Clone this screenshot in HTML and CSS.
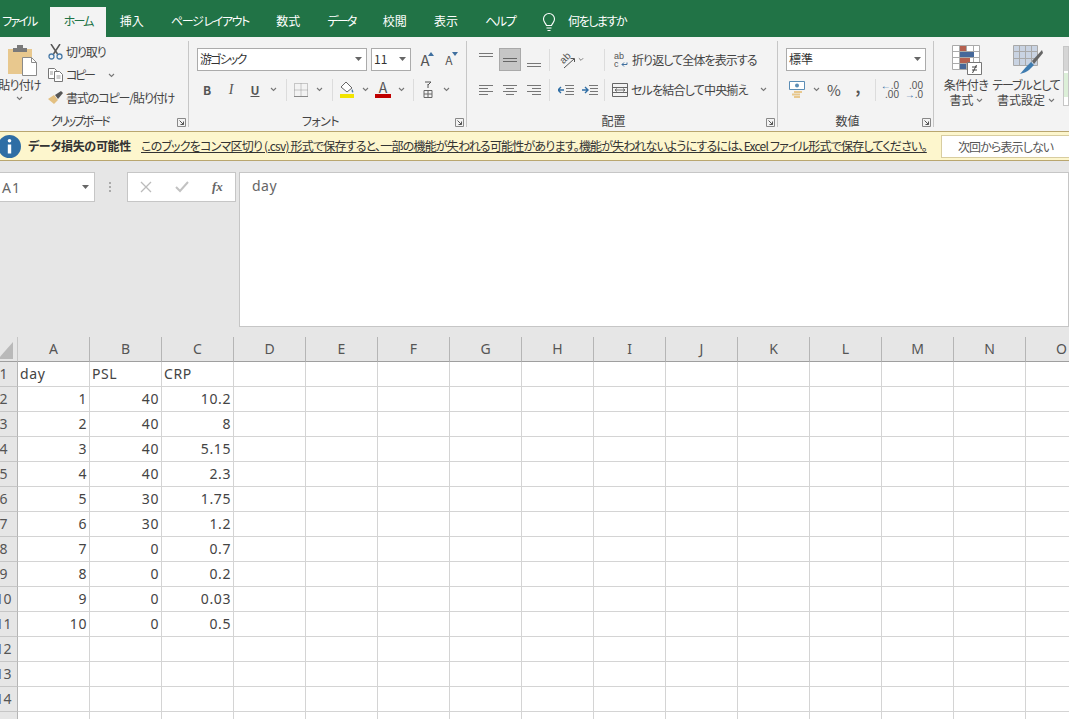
FILE: index.html
```html
<!DOCTYPE html>
<html lang="ja">
<head>
<meta charset="utf-8">
<title>Excel</title>
<link rel="stylesheet" href="styles.css">
</head>
<body>
<svg class="defs" width="0" height="0"><defs>
<symbol id="chev" viewBox="0 0 7 5"><path d="M1 1l2.5 2.5L6 1" fill="none" stroke="#777" stroke-width="1.1"/></symbol>
<symbol id="launch" viewBox="0 0 9 9"><path d="M.5.5h8v8h-8z" fill="none" stroke="#888"/><path d="M2.5 2.5l4 4M6.5 3.5v3h-3" fill="none" stroke="#555"/></symbol>
<symbol id="tri" viewBox="0 0 7 4"><path d="M0 0h7L3.5 4z" fill="#666"/></symbol>
</defs></svg>

<nav class="tabs">
  <span class="tab k2">ファイル</span>
  <span class="tab k2 tab-active">ホーム</span>
  <span class="tab">挿入</span>
  <span class="tab k13">ページ レイアウト</span>
  <span class="tab">数式</span>
  <span class="tab k2">データ</span>
  <span class="tab">校閲</span>
  <span class="tab">表示</span>
  <span class="tab k13">ヘルプ</span>
  <svg class="bulb" width="16" height="20" viewBox="0 0 16 20"><path d="M5.5 13.5C4.500 11 2.500 10 2.500 7a5.500 5.500 0 0 1 11 0c0 3-2 4-3 6.500zM5.500 16h5M6.500 18.500h3" fill="none" stroke="#fff" stroke-width="1.1"/></svg>
  <span class="tell k13">何をしますか</span>
</nav>

<section class="ribbon">
  <div class="group g-clip">
    <div class="g-body clip-body">
      <div class="paste">
        <svg width="30" height="32" viewBox="0 0 30 32"><path d="M0 4h24v25H0z" fill="#e8c88e"/><path d="M5 3h4V0h6v3h4v4H5z" fill="#7a7a7a"/><path d="M14.500 12.500h9l5 5v13h-14z" fill="#fff" stroke="#8a8a8a"/><path d="M23.500 12.500v5h5" fill="none" stroke="#8a8a8a"/></svg>
        <span class="paste-label">貼り付け</span>
        <svg class="ch" width="7" height="5"><use href="#chev"/></svg>
      </div>
      <div class="clip-list">
        <div class="clip-item"><svg width="15" height="16" viewBox="0 0 15 16"><path d="M3 0l6.500 10M12 0L5.500 10" stroke="#555" stroke-width="1.500" fill="none"/><circle cx="3.500" cy="12.500" r="2.500" fill="none" stroke="#4a7ba8" stroke-width="1.300"/><circle cx="11.500" cy="12.500" r="2.500" fill="none" stroke="#4a7ba8" stroke-width="1.300"/></svg><span class="k1">切り取り</span></div>
        <div class="clip-item"><svg width="15" height="14" viewBox="0 0 15 14"><path d="M.5.5h6l2 2v8h-8z" fill="#fff" stroke="#777"/><path d="M6.500 3.500h5l3 3v7h-8z" fill="#fff" stroke="#777"/><path d="M8.500 8h4M8.500 10h4M2 4h3M2 6h3" stroke="#999"/></svg><span class="k3">コピー</span><svg class="ch copy-ch" width="7" height="5"><use href="#chev"/></svg></div>
        <div class="clip-item"><svg width="15" height="14" viewBox="0 0 15 14"><path d="M0 8l6-4 4 5-4 4z" fill="#e3c081"/><path d="M7 4l6-4 2 2-5 6z" fill="#555"/></svg><span class="k1">書式のコピー/貼り付け</span></div>
      </div>
    </div>
    <div class="g-label lab-clip"><span class="k3">クリップボード</span><svg class="launch" width="9" height="9"><use href="#launch"/></svg></div>
  </div>

  <div class="group g-font">
    <div class="g-body">
      <div class="row">
        <div class="select sel-font"><span class="k2">游ゴシック</span><svg width="7" height="4"><use href="#tri"/></svg></div>
        <div class="select sel-size"><span>11</span><svg width="7" height="4"><use href="#tri"/></svg></div>
        <span class="tool big-a">A<svg class="a-tri" width="6" height="4" viewBox="0 0 6 4"><path d="M3 0l3 4H0z" fill="#3f6f9f"/></svg></span>
        <span class="tool small-a">A<svg class="a-tri" width="6" height="4" viewBox="0 0 6 4"><path d="M0 0h6L3 4z" fill="#3f6f9f"/></svg></span>
      </div>
      <div class="row row-two">
        <span class="tool bold">B</span>
        <span class="tool ital">I</span>
        <span class="tool under">U</span>
        <span class="chev"><svg width="7" height="5"><use href="#chev"/></svg></span>
        <i class="sep"></i>
        <span class="tool"><svg width="14" height="14" viewBox="0 0 14 14"><path d="M.5.5h13v13H.5zM7 .5v13M.5 7h13" fill="none" stroke="#999" stroke-dasharray="1 1"/><path d="M0 13.500h14" stroke="#888"/></svg></span>
        <span class="chev"><svg width="7" height="5"><use href="#chev"/></svg></span>
        <i class="sep"></i>
        <span class="tool"><svg width="16" height="17" viewBox="0 0 16 17"><path d="M7 1l6 6-5 4-6-5z" fill="#fff" stroke="#666"/><path d="M13 8c1 1.500 2 3 1 3.500s-2-1-1-3.500z" fill="#4a7ba8"/><path d="M1 13h14v4H1z" fill="#f2e400"/></svg></span>
        <span class="chev"><svg width="7" height="5"><use href="#chev"/></svg></span>
        <span class="tool font-a"><span>A</span><i class="red-bar"></i></span>
        <span class="chev"><svg width="7" height="5"><use href="#chev"/></svg></span>
        <i class="sep sep-b"></i>
        <span class="tool"><svg width="10" height="18" viewBox="0 0 10 18"><path d="M2 1h6L5 4M5 3v4" fill="none" stroke="#555"/><path d="M1 9.500h8v7H1zM5 9.500v7M1 13h8" fill="none" stroke="#666"/></svg></span>
        <span class="chev"><svg width="7" height="5"><use href="#chev"/></svg></span>
      </div>
    </div>
    <div class="g-label lab-font"><span class="k0">フォント</span><svg class="launch" width="9" height="9"><use href="#launch"/></svg></div>
  </div>

  <div class="group g-align">
    <div class="g-body">
      <div class="row">
        <span class="tool"><svg width="14" height="22" viewBox="0 0 14 22"><path d="M0 4.500h14M0 7.500h14" stroke="#777"/></svg></span>
        <span class="tool tool-on"><svg width="14" height="8" viewBox="0 0 14 8"><path d="M0 2.500h14M0 5.500h14" stroke="#666"/></svg></span>
        <span class="tool"><svg width="14" height="22" viewBox="0 0 14 22"><path d="M0 14.500h14M0 17.500h14" stroke="#777"/></svg></span>
        <i class="sep sep-a1"></i>
        <span class="tool"><svg class="orient-ic" width="18" height="18" viewBox="0 0 18 18"><text class="orient" x="4" y="11" transform="rotate(-45 8 9)">ab</text><path d="M7 17l10-9M13.500 7.500H17.500V11" fill="none" stroke="#555"/></svg></span>
        <span class="chev chev-o"><svg width="7" height="5"><use href="#chev"/></svg></span>
        <i class="sep sep-c"></i>
        <span class="wide"><svg width="16" height="16" viewBox="0 0 16 16"><text class="ab" x="1" y="7">ab</text><text class="ab" x="1" y="15">c</text><path d="M9 12.500h5v-2M9 12.500l2-2M9 12.500l2 2" fill="none" stroke="#3f6f9f"/></svg><span class="k09">折り返して全体を表示する</span></span>
      </div>
      <div class="row row-two">
        <span class="tool"><svg width="14" height="12" viewBox="0 0 14 12"><path d="M0 1.500h14M0 4.500h9M0 7.500h14M0 10.500h9" stroke="#777"/></svg></span>
        <span class="tool"><svg width="14" height="12" viewBox="0 0 14 12"><path d="M0 1.500h14M3 4.500h8M0 7.500h14M3 10.500h8" stroke="#777"/></svg></span>
        <span class="tool"><svg width="14" height="12" viewBox="0 0 14 12"><path d="M0 1.500h14M5 4.500h9M0 7.500h14M5 10.500h9" stroke="#777"/></svg></span>
        <i class="sep sep-a1"></i>
        <span class="tool"><svg width="16" height="12" viewBox="0 0 16 12"><path d="M0 6h6M3 3L0 6l3 3" fill="none" stroke="#2f6ea5" stroke-width="1.400"/><path d="M7 1.500h9M8 4.500h8M8 7.500h8M7 10.500h9" stroke="#777"/></svg></span>
        <span class="tool"><svg width="16" height="12" viewBox="0 0 16 12"><path d="M0 6h6M3 3l3 3-3 3" fill="none" stroke="#2f6ea5" stroke-width="1.400"/><path d="M7 1.500h9M8 4.500h8M8 7.500h8M7 10.500h9" stroke="#777"/></svg></span>
        <i class="sep sep-d"></i>
        <span class="wide"><svg width="16" height="16" viewBox="0 0 16 16"><path d="M.5 1.500h15v13H.5zM.5 5.500h15M.5 10.500h15" fill="none" stroke="#666"/><path d="M3 8h10M3 8l2-1.500M3 8l2 1.500M13 8l-2-1.500M13 8l-2 1.500" fill="none" stroke="#555" stroke-width=".8"/></svg><span class="k08">セルを結合して中央揃え</span><svg class="ch merge-ch" width="7" height="5"><use href="#chev"/></svg></span>
      </div>
    </div>
    <div class="g-label lab-align"><span>配置</span><svg class="launch" width="9" height="9"><use href="#launch"/></svg></div>
  </div>

  <div class="group g-num">
    <div class="g-body">
      <div class="row">
        <div class="select sel-num"><span>標準</span><svg width="7" height="4"><use href="#tri"/></svg></div>
      </div>
      <div class="row row-two">
        <span class="tool"><svg width="18" height="17" viewBox="0 0 18 17"><path d="M.5.500h15v8H.5z" fill="#fff" stroke="#5b8db5"/><circle cx="8" cy="4.500" r="2" fill="#5b8db5"/><path d="M5 10h8v2H5zM3 12.500h8v2H3zM5 15h6v2H5z" fill="#e8c88e"/></svg></span>
        <span class="chev"><svg width="7" height="5"><use href="#chev"/></svg></span>
        <span class="tool pct">%</span>
        <span class="tool comma">,</span>
        <i class="sep sep-e"></i>
        <span class="tool dec"><i class="dec-top"><b>←</b>.0</i><i>.00</i></span>
        <span class="tool dec"><i>.00</i><i class="dec-top"><b>→</b>.0</i></span>
      </div>
    </div>
    <div class="g-label lab-num"><span>数値</span><svg class="launch" width="9" height="9"><use href="#launch"/></svg></div>
  </div>

  <div class="group g-style">
    <div class="style-btn sb-a">
      <svg width="30" height="30" viewBox="0 0 30 30"><path d="M.5.500h27v24H.5zM7.500.500v24M14.500.500v24M21.500.500v24M.5 6.500h27M.5 12.500h27M.5 18.500h27" fill="#fff" stroke="#aaa"/><path d="M8 1h6v5H8z" fill="#b5604f"/><path d="M8 7h14v5H8z" fill="#46689a"/><path d="M8 13h10v5H8z" fill="#b5604f"/><path d="M8 19h6v5H8z" fill="#46689a"/><path d="M15.500 17.500h14v12h-14z" fill="#fff" stroke="#777"/><path d="M20 22h5M20 25h5M24.500 20l-4 8" stroke="#444" fill="none"/></svg>
      <span class="k05">条件付き</span>
      <span>書式<svg class="ch style-ch" width="7" height="5"><use href="#chev"/></svg></span>
    </div>
    <div class="style-btn sb-b">
      <svg width="30" height="30" viewBox="0 0 30 30"><path d="M.5.500h24v20H.5z" fill="#c9d3e2" stroke="#a9a9a9"/><path d="M.5 6.500h24M.5 13.500h24M6.500.500v20M12.500.500v20M18.500.500v20" stroke="#a9a9a9"/><path d="M13 22l5-5 3 3-5 5c-2 2-6 3-9 4 2-2 4-5 6-7z" fill="#3f7cb0"/><path d="M19 16L29 5l1 3-9 11z" fill="#666"/></svg>
      <span class="k1">テーブルとして</span>
      <span>書式設定<svg class="ch style-ch" width="7" height="5"><use href="#chev"/></svg></span>
    </div>
    <div class="cell-style"><i></i><i class="cs-g"></i></div>
  </div>
</section>

<div class="msgbar">
  <svg class="info" width="23" height="23" viewBox="0 0 23 23"><circle cx="11.500" cy="11.500" r="11.500" fill="#2f6ea5"/><circle cx="11.500" cy="5.800" r="1.800" fill="#fff"/><path d="M9.800 9.500h3.400v9H9.800z" fill="#fff"/></svg>
  <strong class="msg-title">データ損失の可能性</strong>
  <span class="msg-link">このブックをコンマ区切り (.csv) 形式で保存すると、一部の機能が失われる可能性があります。機能が失われないようにするには、Excel ファイル形式で保存してください。</span>
  <span class="msg-btn">次回から表示しない</span>
</div>

<div class="fbar">
  <div class="namebox"><span>A1</span><svg width="7" height="4"><use href="#tri"/></svg></div>
  <svg class="dots" width="3" height="11" viewBox="0 0 3 11"><path d="M0 0h2v2H0zM0 4h2v2H0zM0 8h2v2H0z" fill="#aaa"/></svg>
  <div class="fnbox">
    <svg width="12" height="12" viewBox="0 0 12 12"><path d="M1 1l10 10M11 1L1 11" stroke="#bbb" stroke-width="1.300"/></svg>
    <svg width="14" height="12" viewBox="0 0 14 12"><path d="M1 6l4 4 8-9" stroke="#c2c2c2" stroke-width="2" fill="none"/></svg>
    <span class="fx">fx</span>
  </div>
  <div class="finput">day</div>
</div>

<div class="sheet" id="sheet">
  <div class="corner"><svg width="15" height="17" viewBox="0 0 15 17"><path d="M15 0v17H0z" fill="#b9b9b9"/></svg></div>
  <div class="ch-cell">A</div><div class="ch-cell">B</div><div class="ch-cell">C</div><div class="ch-cell">D</div><div class="ch-cell">E</div><div class="ch-cell">F</div><div class="ch-cell">G</div><div class="ch-cell">H</div><div class="ch-cell">I</div><div class="ch-cell">J</div><div class="ch-cell">K</div><div class="ch-cell">L</div><div class="ch-cell">M</div><div class="ch-cell">N</div><div class="ch-cell">O</div>
</div>
<script src="sheet.js"></script>
</body>
</html>
```

FILE: sheet.js
```js
var rows = [
  ["day", "PSL", "CRP"], [1, 40, 10.2], [2, 40, 8], [3, 40, 5.15], [4, 40, 2.3], [5, 30, 1.75],
  [6, 30, 1.2], [7, 0, 0.7], [8, 0, 0.2], [9, 0, 0.03], [10, 0, 0.5], [], [], [], []
];
var sheet = document.getElementById("sheet");
rows.forEach(function (r, i) {
  var h = document.createElement("div");
  h.className = "rh-cell";
  h.textContent = i + 1;
  sheet.appendChild(h);
  for (var c = 0; c < 15; c++) {
    var d = document.createElement("div");
    var v = r[c];
    d.className = "cell" + (typeof v === "number" ? " num" : "");
    if (v !== undefined) d.textContent = v;
    sheet.appendChild(d);
  }
});
```

FILE: styles.css
```css
* { box-sizing: border-box; }
html, body { margin: 0; height: 719px; overflow: hidden; }
body {
  background: #e6e6e6;
  color: #444;
  font: 12px/16px "Noto Sans CJK JP", "Noto Sans", sans-serif;
  font-feature-settings: "palt";
  white-space: nowrap;
}
.defs { position: absolute; }
i { font-style: normal; }

.k0 { letter-spacing: -.5px; }
.k05 { letter-spacing: -.5px; }
.k08 { letter-spacing: -.8px; }
.k09 { letter-spacing: -.9px; }
.k1 { letter-spacing: -1.1px; }
.k13 { letter-spacing: -1.4px; }
.k2 { letter-spacing: -1.8px; }
.k3 { letter-spacing: -2.3px; }

.tabs {
  display: flex;
  height: 37px;
  padding-top: 7px;
  margin-left: -11.5px;
  background: #217346;
  color: #fff;
  align-items: stretch;
}
.tab { padding: 6px 13.6px 0; }
.tab-active { background: #f3f3f3; color: #217346; }
.bulb { margin: 5px 0 0 12px; }
.tell { padding: 6px 0 0 11px; }

.ribbon { display: flex; height: 94px; background: #f3f3f3; }
.group {
  display: flex;
  flex-direction: column;
  height: 86px;
  margin-top: 4px;
  border-right: 1px solid #c6c6c6;
  flex: none;
}
.g-body { height: 72px; padding-top: 7px; flex: none; }
.g-label { position: relative; height: 16px; text-align: center; color: #444; flex: none; }
.launch { position: absolute; right: 2px; top: 5px; }
.lab-clip { padding-right: 29px; }
.lab-font { padding-right: 20px; }
.lab-align { padding-right: 24px; }
.lab-num { padding-right: 24px; }
.g-clip { width: 189px; }
.g-font { width: 278px; padding-left: 6px; }
.g-font .row:first-child { margin-left: 2px; }
.g-align { width: 311px; padding-left: 7px; }
.g-num { width: 156px; padding-left: 8px; }
.g-style { display: flex; flex-direction: row; flex: 1; border: 0; padding-left: 3px; overflow: hidden; }

.row { display: flex; height: 23px; align-items: center; }
.row-two { margin-top: 7px; }
.tool {
  position: relative;
  display: flex;
  width: 24px;
  height: 23px;
  align-items: center;
  justify-content: center;
  flex: none;
}
.tool-on { background: #c6c6c6; border: 1px solid #a9a9a9; width: 22px; margin: 0 1px; }
.chev { display: flex; width: 12px; justify-content: center; flex: none; }
.chev-o { width: 6px; }
.sep { width: 1px; height: 22px; margin: 0 2px 0 7px; background: #dcdcdc; flex: none; }
.sep-b { margin-left: 6px; }
.sep-a1 { margin: 0 4px 0 3px; }
.sep-c { margin: 0 8px 0 20px; }
.sep-d { margin: 0 7px 0 2px; }
.sep-e { margin: 0 3px 0 5px; }

.select {
  display: flex;
  height: 23px;
  padding: 0 4px 1px 2px;
  justify-content: space-between;
  align-items: center;
  background: #fff;
  border: 1px solid #ababab;
  color: #333;
  flex: none;
}
.sel-font { width: 170px; margin-right: 4px; }
.sel-size { width: 40px; margin-right: 2px; }
.sel-num { width: 140px; }

.big-a { font-size: 15px; color: #555; }
.small-a { font-size: 12px; color: #555; }
.a-tri { position: absolute; top: 4px; right: 3px; }
.bold { font-weight: 700; color: #555; }
.ital { font-style: italic; font-family: "Liberation Serif", serif; font-size: 14px; color: #555; }
.under { font-weight: 700; text-decoration: underline; color: #555; }
.font-a { flex-direction: column; font-size: 14px; line-height: 13px; color: #555; }
.red-bar { width: 16px; height: 4px; background: #c00000; }
.pct { font-size: 15px; color: #555; }
.comma { font-size: 15px; font-weight: 700; color: #555; padding-bottom: 6px; }
.dec { flex-direction: column; font: 10px/9px "Liberation Sans", sans-serif; color: #555; align-items: flex-end; padding-right: 4px; }
.dec b { color: #2f6ea5; font-weight: 400; }

.wide { display: flex; align-items: center; gap: 3px; color: #444; flex: none; }
.ch { flex: none; }
.merge-ch { margin-left: 9px; }
.orient-ic { overflow: visible; }
.orient { font: 10px "Liberation Sans", sans-serif; fill: #555; }
.ab { font: 9px "Liberation Sans", sans-serif; fill: #555; }

.clip-body { display: flex; padding-top: 3px; }
.paste { position: relative; display: flex; width: 47px; flex-direction: column; align-items: center; margin-left: -4px; flex: none; }
.paste svg:first-child { margin: 1px 0 0 6px; }
.paste-label { height: 17px; letter-spacing: -.8px; }
.paste .ch { margin-top: 2px; }
.clip-list { display: flex; flex-direction: column; gap: 7px; margin-left: 5px; }
.clip-item { display: flex; height: 16px; align-items: center; gap: 3px; }
.copy-ch { margin-left: 11px; }

.style-btn { display: flex; flex-direction: column; align-items: center; line-height: 15px; color: #444; padding-top: 4px; flex: none; }
.style-btn svg:first-child { margin-bottom: 2px; }
.sb-a { width: 50px; margin-right: 1px; margin-left: 4px; }
.sb-a svg:first-child { margin-left: 2px; }
.sb-b { width: 68px; }
.sb-b svg:first-child { margin-left: 3px; }
.style-ch { margin-left: 5px; }
.cell-style { margin: 5px 0 0 3px; width: 20px; height: 60px; background: #fff; border: 1px solid #c6c6c6; }
.cell-style i { display: block; height: 26px; background: #d5d5d5; border-bottom: 2px solid #fff; }
.cell-style .cs-g { background: #dcefd8; }

.msgbar {
  display: flex;
  height: 30px;
  align-items: center;
  background: #fdf6cd;
  border-top: 1px solid #b9a66f;
  border-bottom: 1px solid #b9a66f;
  color: #333;
}
.info { margin-left: -2px; flex: none; }
.msg-title { margin-left: 7px; font-weight: 700; width: 113px; letter-spacing: -.3px; flex: none; }
.msg-link { text-decoration: underline; width: 800px; letter-spacing: -.79px; flex: none; }
.msg-btn {
  height: 23px;
  width: 130px;
  padding: 3px 0 0 16px;
  background: #fff;
  border: 1px solid #d8cda0;
  color: #555;
  letter-spacing: -.9px;
  flex: none;
}

.fbar {
  display: flex;
  height: 176px;
  padding-top: 11px;
  align-items: flex-start;
  background: #e6e6e6;
}
.namebox {
  display: flex;
  width: 97px;
  height: 30px;
  margin-left: -1px;
  padding: 0 5px 0 2px;
  justify-content: space-between;
  align-items: center;
  background: #fff;
  border: 1px solid #c6c6c6;
  font: 14px "Noto Sans", sans-serif;
  letter-spacing: 1px;
  color: #666;
}
.dots { margin: 10px 15px 0 14px; }
.fnbox {
  display: flex;
  width: 110px;
  height: 30px;
  padding: 0 12px;
  justify-content: space-between;
  align-items: center;
  background: #fff;
  border: 1px solid #c6c6c6;
}
.fx { font: italic 700 13px "Liberation Serif", serif; color: #666; }
.finput {
  width: 840px;
  height: 155px;
  margin-left: 3px;
  padding: 3px 12px;
  background: #fff;
  border: 1px solid #c6c6c6;
  font: 14px/20px "Noto Sans", sans-serif;
  letter-spacing: .6px;
  color: #666;
}

.sheet {
  display: grid;
  grid-template-columns: 24px repeat(15, 72px);
  grid-auto-rows: 25px;
  width: 1104px;
  margin-left: -6px;
  background: #fff;
  font: 14px/24px "Noto Sans", sans-serif;
  font-feature-settings: normal;
  color: #444;
}
.corner { display: flex; justify-content: flex-end; padding: 5px 4px 0 0; background: #e6e6e6; border-right: 1px solid #c6c6c6; border-bottom: 1px solid #9f9f9f; }
.ch-cell { background: #e6e6e6; text-align: center; color: #555; border-right: 1px solid #b5b5b5; border-bottom: 1px solid #9f9f9f; }
.rh-cell { background: #e6e6e6; text-align: center; padding-right: 4px; color: #555; border-right: 1px solid #b5b5b5; border-bottom: 1px solid #c6c6c6; }
.cell { padding: 0 2px; border-right: 1px solid #d4d4d4; border-bottom: 1px solid #d4d4d4; letter-spacing: .6px; overflow: hidden; }
.num { text-align: right; }
```
